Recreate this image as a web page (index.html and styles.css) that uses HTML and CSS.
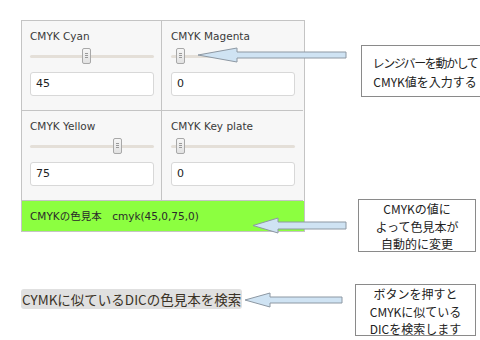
FILE: index.html
```html
<!DOCTYPE html>
<html lang="ja">
<head>
<meta charset="utf-8">
<link rel="stylesheet" href="styles.css">
</head>
<body>
<div class="page">
  <div class="panel">
    <div class="grid">
      <div class="cell">
        <div class="label">CMYK Cyan</div>
        <div class="slider"><div class="track"></div><div class="thumb t45"></div></div>
        <div class="input">45</div>
      </div>
      <div class="cell">
        <div class="label">CMYK Magenta</div>
        <div class="slider"><div class="track"></div><div class="thumb t0"></div></div>
        <div class="input">0</div>
      </div>
      <div class="cell">
        <div class="label">CMYK Yellow</div>
        <div class="slider"><div class="track"></div><div class="thumb t75"></div></div>
        <div class="input">75</div>
      </div>
      <div class="cell">
        <div class="label">CMYK Key plate</div>
        <div class="slider"><div class="track"></div><div class="thumb t0"></div></div>
        <div class="input">0</div>
      </div>
    </div>
    <div class="swatch">CMYKの色見本　cmyk(45,0,75,0)</div>
  </div>
  <div class="btn">CYMKに似ているDICの色見本を検索</div>
</div>

<div class="note note1"><span class="tight">レンジバーを動かして</span><br>CMYK値を入力する</div>
<div class="note note2">CMYKの値に<br>よって色見本が<br>自動的に変更</div>
<div class="note note3">ボタンを押すと<br>CMYKに似ている<br>DICを検索します</div>

<svg class="arrows" width="480" height="340" viewBox="0 0 480 340">
  <polygon points="198,55 237,48 237,52 346,52 346,58 237,58 237,62" />
  <polygon points="253,225.5 278,218 278,222 346,222 346,229 278,229 278,233" />
  <polygon points="245,300 270,293 270,297 342,297 342,303 270,303 270,307" />
</svg>
</body>
</html>
```

FILE: styles.css
```css
html, body {
  margin: 0;
  padding: 0;
  background: #ffffff;
}
body {
  width: 480px;
  height: 340px;
  overflow: hidden;
  position: relative;
  font-family: "DejaVu Sans", "Noto Sans CJK JP", sans-serif;
  color: #333;
}
.page {
  padding: 20px 0 0 21px;
}
.panel {
  width: 282px;
  border: 1px solid #c4c4c4;
  background: #f7f7f7;
}
.grid {
  display: grid;
  grid-template-columns: 140px 141px;
}
.cell {
  padding: 8px 7px 0 8px;
  box-sizing: border-box;
  height: 90px;
  border-bottom: 1px solid #c4c4c4;
}
.cell:nth-child(odd) {
  border-right: 1px solid #c4c4c4;
}
.cell:nth-child(even) {
  padding-left: 9px;
  padding-right: 8px;
}
.label {
  font-size: 10.5px;
  line-height: 14px;
  color: #3a3a3a;
  height: 14px;
}
.slider {
  position: relative;
  height: 16px;
  margin-top: 5px;
}
.track {
  position: absolute;
  left: 0;
  right: 0;
  top: 7px;
  height: 3px;
  background: #e4dfd8;
  border-radius: 2px;
}
.thumb {
  position: absolute;
  top: 0;
  width: 7px;
  height: 14px;
  border: 1px solid #a8a8a8;
  border-radius: 2px;
  background: linear-gradient(#f6f6f6, #e2e2e2);
}
.thumb::after {
  content: "";
  position: absolute;
  left: 2px;
  right: 2px;
  top: 4px;
  height: 5px;
  background: repeating-linear-gradient(#9a9a9a 0 1px, transparent 1px 2px);
}
.t0 { left: 5px; }
.t45 { left: 52px; }
.t75 { left: 83px; }
.input {
  margin-top: 8px;
  height: 24px;
  box-sizing: border-box;
  border: 1px solid #d8d8d8;
  border-radius: 3px;
  background: #fff;
  font-size: 11px;
  line-height: 22px;
  padding-left: 5px;
  color: #222;
}
.swatch {
  height: 30px;
  background: #8cff40;
  font-size: 10.5px;
  line-height: 30px;
  padding-left: 8px;
  color: #2a2a2a;
}
.btn {
  margin-top: 57px;
  display: inline-block;
  height: 20px;
  line-height: 20px;
  padding: 0 1px;
  background: #e0e0e0;
  border-radius: 3px;
  font-family: "Noto Sans CJK JP", sans-serif;
  font-size: 13.5px;
  color: #3a3226;
}
.note {
  position: absolute;
  background: #fff;
  border: 1px solid #8a8a8a;
  font-family: "Noto Sans CJK JP", sans-serif;
  color: #222;
  text-align: center;
  box-sizing: border-box;
  white-space: nowrap;
  font-size: 12px;
}
.tight {
  letter-spacing: -1.4px;
}
.note1 {
  left: 361px;
  top: 45px;
  width: 128px;
  height: 52px;
  line-height: 19px;
  padding-top: 7px;
}
.note2 {
  left: 358px;
  top: 199px;
  width: 118px;
  height: 53px;
  line-height: 17.5px;
}
.note3 {
  left: 355px;
  top: 284px;
  width: 121px;
  height: 52px;
  line-height: 17.5px;
}
.arrows {
  position: absolute;
  left: 0;
  top: 0;
  pointer-events: none;
}
.arrows polygon {
  fill: #cfe3f3;
  stroke: #8d98a3;
  stroke-width: 1;
}
```
